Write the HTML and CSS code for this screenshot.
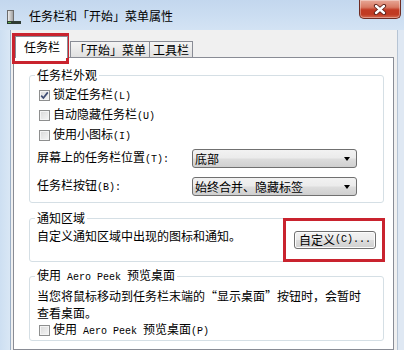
FILE: index.html
```html
<!DOCTYPE html>
<html lang="zh-CN">
<head>
<meta charset="utf-8">
<link rel="stylesheet" href="styles.css">
</head>
<body>
<div class="window">
  <div class="titlebar">
    <svg class="app-icon" width="14" height="14" viewBox="0 0 14 14">
      <defs>
        <linearGradient id="ig" x1="0" x2="1" y1="0" y2="0">
          <stop offset="0" stop-color="#f4f4f4"/>
          <stop offset="1" stop-color="#9a9a9a"/>
        </linearGradient>
      </defs>
      <rect x="0.5" y="0.5" width="6" height="11" fill="url(#ig)" stroke="#6d6d6d"/>
      <rect x="0" y="11" width="14" height="3" fill="#2f3b33"/>
      <rect x="1" y="12" width="3" height="1" fill="#5fae4a"/>
    </svg>
    <span class="title">任务栏和「开始」菜单属性</span>
    <div class="close">
      <svg width="14" height="11" viewBox="0 0 14 11">
        <path d="M3 2 L11 9 M11 2 L3 9" stroke="#5a1e16" stroke-width="4.2" stroke-linecap="round"/>
        <path d="M3 2 L11 9 M11 2 L3 9" stroke="#ffffff" stroke-width="2.4" stroke-linecap="round"/>
      </svg>
    </div>
  </div>
  <div class="client">
    <div class="frame-l"></div>
    <div class="dialog">
      <div class="tabs">
        <div class="tab sel">任务栏</div>
        <div class="tab">「开始」菜单</div>
        <div class="tab">工具栏</div>
      </div>
      <div class="panel">
        <fieldset class="group g1">
          <legend>任务栏外观</legend>
          <div class="check">
            <span class="box">
              <svg width="9" height="9" viewBox="0 0 9 9"><path d="M1.2 4.6 L3.4 7 L7.8 1.4" fill="none" stroke="#3f4d74" stroke-width="1.7"/></svg>
            </span>
            <span>锁定任务栏<span class="en">(L)</span></span>
          </div>
          <div class="check">
            <span class="box"></span>
            <span>自动隐藏任务栏<span class="en">(U)</span></span>
          </div>
          <div class="check">
            <span class="box"></span>
            <span>使用小图标<span class="en">(I)</span></span>
          </div>
          <div class="field f1">
            <span>屏幕上的任务栏位置<span class="en">(T):</span></span>
            <div class="select"><span>底部</span><i class="arrow"></i></div>
          </div>
          <div class="field f2">
            <span>任务栏按钮<span class="en">(B):</span></span>
            <div class="select"><span>始终合并、隐藏标签</span><i class="arrow"></i></div>
          </div>
        </fieldset>
        <fieldset class="group g2">
          <legend>通知区域</legend>
          <div class="notify">
            <p class="text">自定义通知区域中出现的图标和通知。</p>
            <div class="btn">自定义<span class="en">(C)...</span></div>
          </div>
        </fieldset>
        <fieldset class="group g3">
          <legend>使用<span class="en"> Aero Peek </span>预览桌面</legend>
          <p class="desc">当您将鼠标移动到任务栏末端的“显示桌面”按钮时，会暂时<br>查看桌面。</p>
          <div class="check">
            <span class="box"></span>
            <span>使用<span class="en"> Aero Peek </span>预览桌面<span class="en">(P)</span></span>
          </div>
        </fieldset>
      </div>
    </div>
    <div class="frame-r"></div>
  </div>
  <div class="mark m1"></div>
  <div class="mark m2"></div>
</div>
</body>
</html>
```

FILE: styles.css
```css
* { box-sizing: border-box; }
html, body { margin: 0; padding: 0; }
body {
  width: 404px;
  height: 350px;
  overflow: hidden;
  font-family: "Noto Sans CJK SC", "Noto Sans", sans-serif;
  font-size: 12px;
  color: #000;
  background: #f0f0f0;
}
.en {
  font-family: "Liberation Mono", monospace;
  font-size: 10px;
}
.window {
  position: relative;
  width: 404px;
  height: 350px;
  display: flex;
  flex-direction: column;
}
.titlebar {
  height: 30px;
  flex: none;
  display: flex;
  align-items: flex-start;
  background: linear-gradient(#c3d7ee, #d3e3f4);
}
.app-icon { margin: 10px 0 0 7px; flex: none; }
.title {
  flex: 1;
  margin: 7px 0 0 8px;
  line-height: 18px;
  font-size: 12px;
}
.close {
  width: 42px;
  height: 19px;
  margin-right: 3px;
  border: 1px solid #6e2b22;
  border-top: none;
  border-radius: 0 0 5px 5px;
  background: linear-gradient(#e8a898 0%, #d87a64 40%, #c23a24 55%, #c03a22 80%, #d4694f 100%);
  box-shadow: inset 0 0 0 1px rgba(255,255,255,0.35);
  display: flex;
  align-items: center;
  justify-content: center;
}
.client {
  flex: 1;
  min-height: 0;
  display: flex;
}
.frame-l {
  width: 11px;
  flex: none;
  background: linear-gradient(90deg, #cddff2, #d9e7f5);
  border-right: 1px solid #9cb0c7;
}
.frame-r {
  width: 7px;
  flex: none;
  background: #dfe8f3;
  border-left: 1px solid #b6c4d4;
}
.dialog {
  flex: 1;
  padding: 6px 3px 0 2px;
  background: #f0f0f0;
  display: flex;
  flex-direction: column;
}
.tabs {
  display: flex;
  align-items: flex-end;
  padding-left: 2px;
  margin-bottom: -1px;
  position: relative;
  z-index: 1;
}
.tab {
  height: 17px;
  padding: 0 3px;
  line-height: 15px;
  border: 1px solid #898c95;
  background: linear-gradient(#f4f4f4, #e0e0e0);
  margin-left: -1px;
}
.tab.sel {
  height: 22px;
  padding: 2px 7px 0 8px;
  line-height: 16px;
  border-bottom: none;
  background: #fff;
  margin-left: 0;
  margin-right: 3px;
}
.panel {
  flex: 1;
  background: #fff;
  border: 1px solid #898c95;
  padding: 9px 9px 0 15px;
}
.group {
  margin: 0;
  padding: 2px 7px 0 7px;
  border: 1px solid #d5dfe5;
  border-radius: 3px;
  min-width: 0;
}
.group legend {
  padding: 0 2px;
  margin-left: -2px;
  line-height: 16px;
}
.g1 { padding-bottom: 6px; }
.g2 { margin-top: 7px; padding-bottom: 12px; }
.g3 { margin-top: 5px; padding-top: 1px; padding-bottom: 1px; }
.check {
  display: flex;
  align-items: center;
  height: 20px;
  line-height: 16px;
}
.box {
  width: 11px;
  height: 11px;
  flex: none;
  margin: 0 3px 0 2px;
  border: 1px solid #8e8f8f;
  background: linear-gradient(135deg, #d9d9d9, #f6f6f6);
  box-shadow: inset 0 0 0 1px #f4f4f4;
  display: flex;
  align-items: center;
  justify-content: center;
}
.field {
  display: flex;
  align-items: center;
  justify-content: space-between;
  padding-right: 19px;
  line-height: 16px;
}
.f1 { margin-top: 4px; }
.f2 { margin-top: 9px; }
.select {
  width: 165px;
  height: 19px;
  border: 1px solid #707070;
  border-radius: 3px;
  background: linear-gradient(#f2f2f2 0%, #ebebeb 48%, #dddddd 52%, #cfcfcf 100%);
  padding: 0 6px 0 2px;
  display: flex;
  align-items: center;
  justify-content: space-between;
  line-height: 17px;
}
.arrow {
  width: 0;
  height: 0;
  border-left: 3.5px solid transparent;
  border-right: 3.5px solid transparent;
  border-top: 4px solid #000;
}
.notify {
  display: flex;
  justify-content: space-between;
  align-items: flex-start;
}
.text {
  margin: 0;
  line-height: 16px;
}
.btn {
  margin-top: 3px;
  width: 82px;
  height: 18px;
  border: 1px solid #707070;
  border-radius: 3px;
  background: linear-gradient(#f2f2f2 0%, #ebebeb 48%, #dddddd 52%, #cfcfcf 100%);
  box-shadow: inset 0 0 0 1px #fcfcfc;
  display: flex;
  align-items: center;
  justify-content: center;
  line-height: 16px;
}
.desc {
  margin: 0;
  line-height: 17px;
}
.g3 .check { height: 18px; }
.mark {
  position: absolute;
  border: 3px solid #c9232e;
}
.m1 { left: 12px; top: 33px; width: 57px; height: 31px; }
.m2 { left: 283px; top: 218px; width: 102px; height: 44px; }
```
